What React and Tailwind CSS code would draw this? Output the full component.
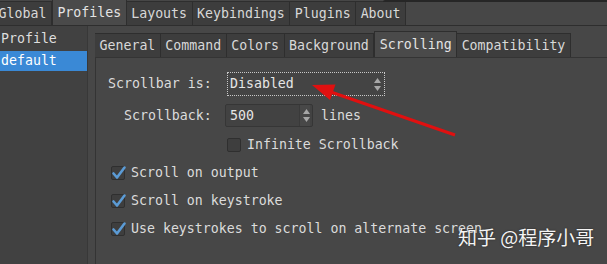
import React from "react";

const mono = { fontFamily: '"DejaVu Sans Mono", monospace' };

function TopTab({ label, active, first }) {
  return (
    <div
      className={
        "flex items-center px-[4.5px] border-r border-[#2e2e2e] " +
        (active
          ? "h-[26px] bg-[#4a4a4a] text-[#e4e4e4] border-l border-t border-[#2e2e2e] border-b-0"
          : "h-[24px] bg-[#3d3d3d] text-[#d8d8d8] border-t border-[#2e2e2e]") +
        (first ? " -ml-[6px]" : "")
      }
    >
      {label}
    </div>
  );
}

function InnerTab({ label, active }) {
  return (
    <div
      className={
        "flex items-center px-[4.5px] border-r border-[#2e2e2e] " +
        (active
          ? "h-[26px] bg-[#4a4a4a] text-[#e4e4e4] border-t border-l border-[#2e2e2e]"
          : "h-[24px] bg-[#3d3d3d] text-[#d8d8d8] border-t border-[#2e2e2e]")
      }
    >
      {label}
    </div>
  );
}

function Check({ checked }) {
  return (
    <div className="relative w-[14px] h-[14px] rounded-[2px] border border-[#2f2f2f] bg-[#3e3e3e] shrink-0">
      {checked && (
        <svg className="absolute -left-[1px] -top-[2px]" width="16" height="16" viewBox="0 0 16 16">
          <path d="M2.5 8.5 L6 12.5 L13.5 2.5" fill="none" stroke="#5b9bd5" strokeWidth="2.6" strokeLinecap="round" strokeLinejoin="round" />
        </svg>
      )}
    </div>
  );
}

function SpinArrows() {
  return (
    <div className="flex flex-col items-center gap-[3px]">
      <svg width="7" height="5" viewBox="0 0 7 5"><path d="M3.5 0 L7 5 L0 5 Z" fill="#a8a8a8" /></svg>
      <svg width="7" height="5" viewBox="0 0 7 5"><path d="M0 0 L7 0 L3.5 5 Z" fill="#a8a8a8" /></svg>
    </div>
  );
}

export default function App() {
  return (
    <div
      className="relative w-[607px] h-[264px] overflow-hidden bg-[#474747] text-[#dcdcdc] text-[13.25px] flex flex-col"
      style={mono}
    >
      {/* top tab bar */}
      <div className="flex items-end h-[26px] bg-[#474747] border-b border-[#2e2e2e] shrink-0">
        <TopTab label="Global" first />
        <TopTab label="Profiles" active />
        <TopTab label="Layouts" />
        <TopTab label="Keybindings" />
        <TopTab label="Plugins" />
        <TopTab label="About" />
      </div>

      <div className="flex flex-1 min-h-0">
        {/* profile list */}
        <div className="w-[88px] shrink-0 bg-[#414141] border-r border-[#383838] flex flex-col">
          <div className="h-[25px] flex items-center pl-[1px] text-[#dedede]">Profile</div>
          <div className="h-[20px] flex items-center pl-[1px] bg-[#3a89d6] text-white">default</div>
        </div>

        {/* right panel */}
        <div className="flex-1 flex flex-col pl-[7px] pt-[5px]">
          <div className="flex items-end h-[26px] shrink-0">
            <InnerTab label="General" />
            <InnerTab label="Command" />
            <InnerTab label="Colors" />
            <InnerTab label="Background" />
            <InnerTab label="Scrolling" active />
            <InnerTab label="Compatibility" />
          </div>
          <div className="flex-1 border-l border-t border-[#343434] bg-[#474747] pt-[14px]">
            {/* scrollbar row */}
            <div className="flex items-center h-[24px]">
              <div className="w-[131px] pl-[12px]">Scrollbar is:</div>
              <div className="w-[158px] h-[24px] border border-dotted border-[#c8c8c8] bg-[#444444] flex items-center justify-between pl-[2px] pr-[3px]">
                <span className="text-[#e6e6e6]">Disabled</span>
                <SpinArrows />
              </div>
            </div>
            {/* scrollback */}
            <div className="flex items-center h-[23px] mt-[8px]">
              <div className="w-[129px] pl-[28px]">Scrollback:</div>
              <div className="w-[88px] h-[23px] rounded-[2px] border border-[#363636] bg-[#424242] flex items-center justify-between pl-[4px] pr-[2px]">
                <span className="text-[#e6e6e6]">500</span>
                <div className="h-full flex items-center pl-[3px] border-l border-[#3a3a3a] bg-[#484848]">
                  <SpinArrows />
                </div>
              </div>
              <span className="ml-[8px]">lines</span>
            </div>
            {/* infinite */}
            <div className="flex items-center h-[20px] mt-[8px] pl-[131px] gap-[6px]">
              <Check />
              <span>Infinite Scrollback</span>
            </div>
            {/* checked rows */}
            <div className="flex items-center h-[20px] mt-[8px] pl-[15px] gap-[6px]">
              <Check checked />
              <span>Scroll on output</span>
            </div>
            <div className="flex items-center h-[20px] mt-[8px] pl-[15px] gap-[6px]">
              <Check checked />
              <span>Scroll on keystroke</span>
            </div>
            <div className="flex items-center h-[20px] mt-[8px] pl-[15px] gap-[6px]">
              <Check checked />
              <span>Use keystrokes to scroll on alternate screen</span>
            </div>
          </div>
        </div>
      </div>

      {/* window edge behind tabs */}
      <div className="absolute top-0 left-[383px] right-0 h-[2px] bg-[#262626] rounded-tl-[3px]" />

      {/* red arrow annotation */}
      <svg className="absolute left-0 top-0 pointer-events-none" width="607" height="264">
        <line x1="455" y1="135" x2="328" y2="91" stroke="#e01010" strokeWidth="3" />
        <polygon points="312,85 335.5,84.5 330,100" fill="#e01010" />
      </svg>

      {/* watermark */}
      <div
        className="absolute left-[458px] top-[223px] text-[19px] text-[#f4f4f4] whitespace-nowrap"
        style={{ fontFamily: '"Noto Sans CJK SC", sans-serif', textShadow: "0 0 2px rgba(0,0,0,0.5)" }}
      >
        知乎 @程序小哥
      </div>
    </div>
  );
}
